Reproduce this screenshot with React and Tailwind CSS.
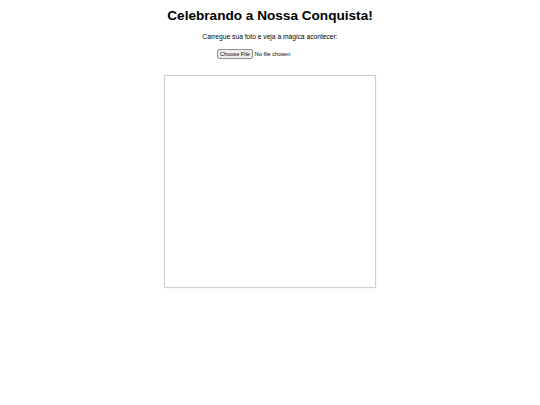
export default function App() {
  return (
    <div className="w-[540px] h-[405px] bg-white flex flex-col items-center" style={{ fontFamily: '"Liberation Sans", Arial, sans-serif' }}>
      <h1 className="mt-[8px] text-[13.6px] leading-[16px] font-bold text-black">Celebrando a Nossa Conquista!</h1>
      <p className="mt-[8px] text-[6.7px] leading-[9px] text-black">Carregue sua foto e veja a mágica acontecer:</p>
      <div className="mt-[8px] w-[106px] flex items-center gap-[2px]">
        <span className="h-[10px] px-[2px] flex items-center border border-[#8f8f8f] rounded-[2px] bg-[#efefef] text-[5.6px] text-black">Choose File</span>
        <span className="text-[5.6px] text-black">No file chosen</span>
      </div>
      <div className="mt-[16px] w-[212px] h-[213px] border border-[#cfcfcf] bg-white shadow-[0_0_2px_rgba(0,0,0,0.08)]"></div>
    </div>
  );
}
